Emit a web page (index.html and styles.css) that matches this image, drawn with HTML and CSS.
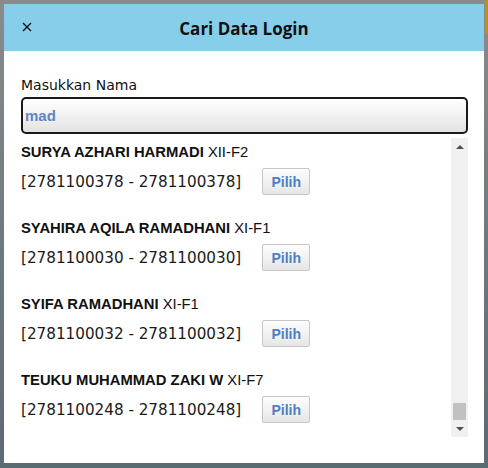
FILE: index.html
```html
<!DOCTYPE html>
<html>
<head>
<meta charset="utf-8">
<link rel="stylesheet" href="styles.css">
</head>
<body>
<div class="dialog">
  <div class="header">
    <span class="close"><svg width="10" height="10" viewBox="0 0 10 10"><path d="M1 1 L9 9 M9 1 L1 9" stroke="#111" stroke-width="1.4" fill="none"/></svg></span>
    <div class="title">Cari Data Login</div>
  </div>
  <div class="content">
    <div class="label">Masukkan Nama</div>
    <div class="input">mad</div>
    <div class="list">
      <div class="items">
        <div class="item">
          <div class="name"><b>SURYA AZHARI HARMADI</b> XII-F2</div>
          <div class="row"><span class="nis">[2781100378 - 2781100378]</span><span class="btn">Pilih</span></div>
        </div>
        <div class="item">
          <div class="name"><b>SYAHIRA AQILA RAMADHANI</b> XI-F1</div>
          <div class="row"><span class="nis">[2781100030 - 2781100030]</span><span class="btn">Pilih</span></div>
        </div>
        <div class="item">
          <div class="name"><b>SYIFA RAMADHANI</b> XI-F1</div>
          <div class="row"><span class="nis">[2781100032 - 2781100032]</span><span class="btn">Pilih</span></div>
        </div>
        <div class="item">
          <div class="name"><b>TEUKU MUHAMMAD ZAKI W</b> XI-F7</div>
          <div class="row"><span class="nis">[2781100248 - 2781100248]</span><span class="btn">Pilih</span></div>
        </div>
      </div>
      <div class="scrollbar">
        <div class="arrow"><span class="tri up"></span></div>
        <div class="track"></div>
        <div class="thumb"></div>
        <div class="arrow"><span class="tri down"></span></div>
      </div>
    </div>
  </div>
</div>
</body>
</html>
```

FILE: styles.css
```css
html, body {
  margin: 0;
  padding: 0;
}
body {
  width: 488px;
  height: 468px;
  box-sizing: border-box;
  padding: 4px 4px 0 4px;
  background:
    linear-gradient(#b89412, #b89412) right top / 3px 34px no-repeat,
    linear-gradient(#8b8b8b, #6f7a7e 50%, #5b6b72);
  overflow: hidden;
}
.dialog {
  width: 480px;
  height: 459px;
  background: #fff;
  display: flex;
  flex-direction: column;
}
.header {
  height: 47px;
  background: #87ceeb;
  display: flex;
  align-items: center;
  position: relative;
}
.close {
  position: absolute;
  left: 18px;
  top: 18px;
  width: 10px;
  height: 10px;
  display: flex;
}
.title {
  flex: 1;
  text-align: center;
  font-family: "Open Sans", "Noto Sans", sans-serif;
  font-weight: 700;
  font-size: 17px;
  color: #111;
  padding-top: 1px;
}
.content {
  padding: 25px 16px 0 17px;
  display: flex;
  flex-direction: column;
}
.label {
  font-family: "DejaVu Sans", sans-serif;
  font-size: 14px;
  line-height: 18px;
  color: #111;
}
.input {
  margin-top: 3px;
  height: 33px;
  border: 2px solid #1a1a1a;
  border-radius: 5px;
  background: linear-gradient(#ffffff, #f2f2f2 50%, #e2e2e2);
  font-family: "Liberation Sans", Arial, sans-serif;
  font-weight: 700;
  font-size: 15px;
  color: #5b86c6;
  line-height: 33px;
  padding-left: 2px;
}
.list {
  margin-top: 4px;
  height: 299px;
  display: flex;
}
.items {
  flex: 1;
  padding-top: 4px;
  overflow: hidden;
}
.item {
  height: 76px;
}
.name {
  font-family: "Liberation Sans", Arial, sans-serif;
  font-size: 14.8px;
  line-height: 20px;
  color: #111;
}
.name b {
  font-weight: 700;
}
.row {
  margin-top: 6px;
  display: flex;
  align-items: center;
  height: 27px;
}
.nis {
  font-family: "DejaVu Sans", sans-serif;
  font-size: 15.2px;
  color: #1a1a1a;
}
.btn {
  margin-left: 21px;
  width: 46px;
  height: 25px;
  border: 1px solid #c6c6c6;
  border-radius: 2px;
  background: linear-gradient(#fdfdfd, #f0f0f0 60%, #e6e6e6);
  font-family: "Liberation Sans", Arial, sans-serif;
  font-weight: 700;
  font-size: 14px;
  color: #4f7fc4;
  display: flex;
  align-items: center;
  justify-content: center;
}
.scrollbar {
  width: 17px;
  background: #f0f0f0;
  display: flex;
  flex-direction: column;
}
.arrow {
  height: 17px;
  display: flex;
  align-items: center;
  justify-content: center;
}
.track {
  flex: 1;
}
.thumb {
  height: 17px;
  margin: 0 2px;
  background: #c1c1c1;
}
.tri {
  width: 0;
  height: 0;
  border-left: 4px solid transparent;
  border-right: 4px solid transparent;
}
.tri.up {
  border-bottom: 4px solid #505050;
}
.tri.down {
  border-top: 4px solid #505050;
}
```
